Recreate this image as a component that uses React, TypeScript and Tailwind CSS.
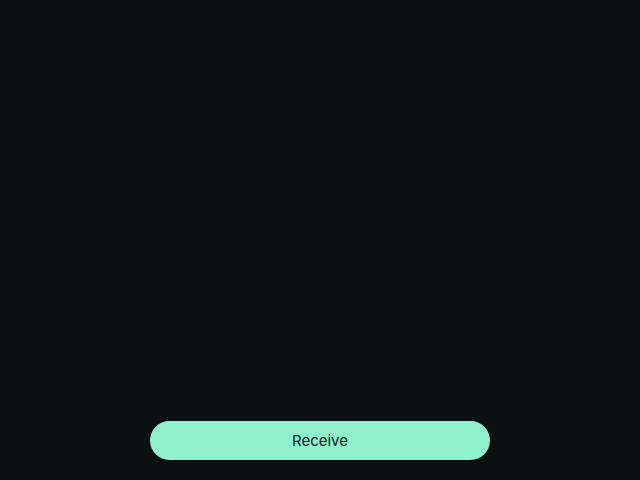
export default function App() {
  return (
    <div className="flex h-screen w-full flex-col justify-end bg-[#0b1110] px-[150px] pb-5 font-['Inter',sans-serif]">
      <button
        type="button"
        className="h-[39px] w-full rounded-full bg-[#8ef0cc] pt-[2px] text-[15px] text-[#0c1f17]"
      >
        Receive
      </button>
    </div>
  );
}
